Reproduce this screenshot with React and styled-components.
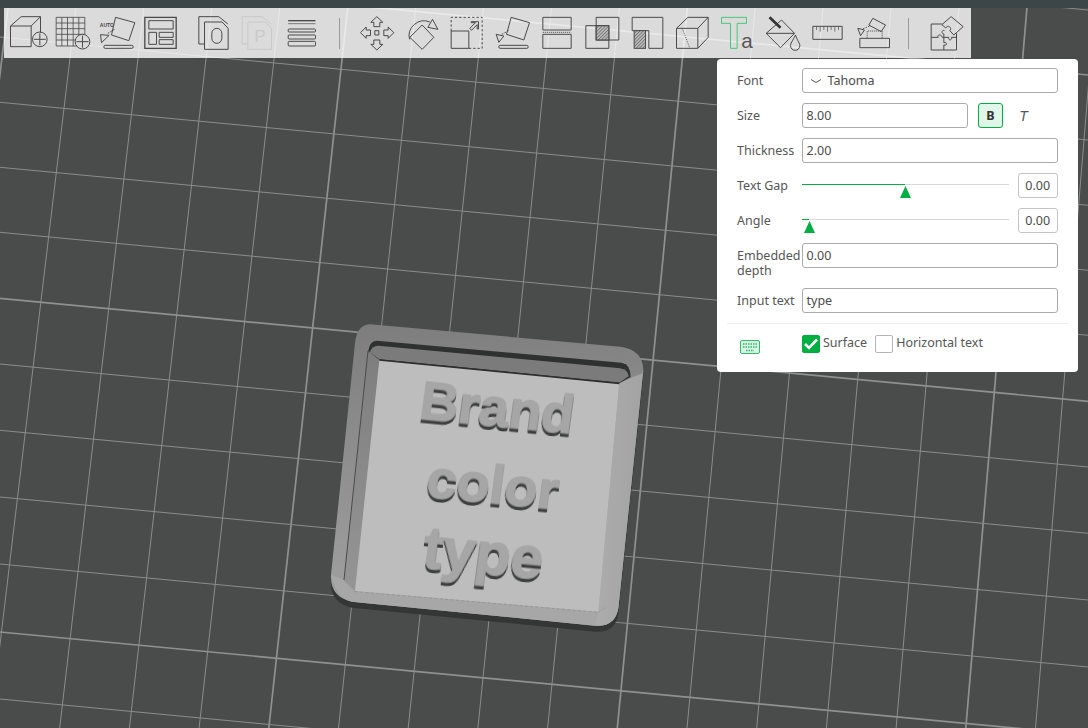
import React from "react";
import styled, { createGlobalStyle } from "styled-components";

const Global = createGlobalStyle`
  html, body { margin: 0; padding: 0; background: #4a4c4c; }
  body { width: 1088px; height: 728px; overflow: hidden; font-family: "Noto Sans", "Liberation Sans", sans-serif; }
  * { box-sizing: border-box; }
`;

const Stage = styled.div`
  position: relative;
  width: 1088px;
  height: 728px;
  overflow: hidden;
  background: #4a4c4c;
`;
const Scene = styled.svg`
  position: absolute;
  inset: 0;
  display: block;
`;
const TopStrip = styled.div`
  position: relative;
  height: 8px;
  background: #3c4648;
`;
const Toolbar = styled.div`
  position: relative;
  display: flex;
  align-items: center;
  width: 967px;
  height: 50px;
  margin-left: 4px;
  padding-left: 1.5px;
  background: rgba(255, 255, 255, 0.8);
`;
const Tool = styled.svg`
  display: block;
  flex: none;
  width: 45px;
  height: 50px;
  fill: none;
  stroke: ${(p) => p.$tone || "#4a4a4a"};
  stroke-width: 3;
`;
const Spacer = styled.div`
  flex: none;
  width: 5px;
`;
const Divider = styled.div`
  flex: none;
  display: flex;
  justify-content: center;
  width: ${(p) => p.$w}px;
  &::before {
    content: "";
    width: 1.5px;
    height: 31px;
    background: #9b9b9b;
  }
`;

const Panel = styled.div`
  position: absolute;
  left: 717px;
  top: 59px;
  width: 361px;
  height: 313px;
  padding: 9px 20px 0;
  background: #fff;
  border-radius: 4px;
  color: #565656;
  font-size: 12.5px;
`;
const Row = styled.div`
  display: flex;
  align-items: center;
  width: 320.5px;
  height: 25px;
  margin-bottom: ${(p) => p.$after || 10}px;
`;
const Label = styled.div`
  flex: none;
  width: 65px;
  line-height: 15px;
  white-space: ${(p) => (p.$wrap ? "normal" : "nowrap")};
  transform: translateY(${(p) => (p.$wrap ? "7px" : "0")});
`;
const Field = styled.div`
  display: flex;
  align-items: center;
  flex: ${(p) => (p.$w ? "none" : "1")};
  width: ${(p) => (p.$w ? `${p.$w}px` : "auto")};
  height: 25px;
  padding: 0 3.5px;
  border: 1px solid #ababab;
  border-radius: 3px;
  color: #4c4c4c;
  white-space: nowrap;
`;
const Chevron = styled.svg`
  display: block;
  width: 10px;
  height: 4px;
  margin: 0 7px 0 4px;
  fill: none;
  stroke: #555;
  stroke-width: 1;
`;
const BoldButton = styled.div`
  display: flex;
  align-items: center;
  justify-content: center;
  flex: none;
  width: 25px;
  height: 25px;
  margin-left: 10px;
  border: 1px solid #00ae42;
  border-radius: 3px;
  background: #e0f6e8;
  color: #333;
  font-weight: 700;
`;
const ItalicButton = styled.div`
  flex: none;
  width: 25px;
  margin-left: 8px;
  text-align: center;
  font-style: italic;
  font-family: "Liberation Sans", sans-serif;
  color: #555;
  font-size: 14px;
`;
const Slider = styled.div`
  position: relative;
  flex: none;
  width: 207px;
  height: 25px;
  margin-right: 9px;
`;
const Track = styled.div`
  position: absolute;
  left: 0;
  right: 0;
  top: 10.5px;
  height: 1.5px;
  background: #d8d8d8;
`;
const TrackFill = styled.div`
  position: absolute;
  left: 0;
  top: 10.5px;
  height: 1.5px;
  background: #00ae42;
`;
const Thumb = styled.svg`
  position: absolute;
  top: 13px;
  width: 11px;
  height: 12px;
  fill: #00ae42;
`;
const Spin = styled.div`
  display: flex;
  align-items: center;
  justify-content: center;
  flex: none;
  width: 39.5px;
  height: 25px;
  border: 1px solid #c4c4c4;
  border-radius: 3px;
  color: #4c4c4c;
`;
const Rule = styled.div`
  height: 1px;
  margin: 0 -10px;
  background: #eeeeee;
`;
const Footer = styled.div`
  display: flex;
  align-items: center;
  width: 321px;
  height: 18px;
  margin-top: 11px;
  line-height: 15px;
`;
const KeyboardIcon = styled.svg`
  display: block;
  flex: none;
  width: 20px;
  height: 14px;
  margin: 5px 42px 0 3px;
  fill: #d9f5e4;
  stroke: #2fbb68;
  stroke-width: 1;
`;
const Check = styled.div`
  display: flex;
  align-items: center;
  justify-content: center;
  flex: none;
  width: 18px;
  height: 18px;
  margin-right: 3px;
  border-radius: 2px;
  border: 1px solid ${(p) => (p.$on ? "#00ae42" : "#b4b4b4")};
  background: ${(p) => (p.$on ? "#00ae42" : "#fff")};
`;
const CheckText = styled.span`
  margin-right: ${(p) => p.$gap || 0}px;
  transform: translateY(-2px);
  white-space: nowrap;
`;

const vLines = Array.from({ length: 17 }, (_, k) => {
  const i = k - 1;
  const top = 70 + 68.05 * i;
  const bot = -10 + 69.7 * i;
  const slope = (bot - top) / 670;
  return { i, x1: top - 58 * slope, x2: bot, thick: (i + 1) % 5 === 0 };
});
const hStarts = [-93, -28, 37, 102.3, 167.3, 232.3, 298.3, 364, 430.3, 497, 564, 632, 699];
const hLines = hStarts.map((y, j) => ({ y, thick: j % 5 === 1 }));

function Grid() {
  return (
    <g>
      {vLines.map((l) => (
        <line key={l.i} x1={l.x1} y1={0} x2={l.x2} y2={728} stroke={l.thick ? "#8f9191" : "#8b8d8d"} strokeWidth={l.thick ? 1.7 : 1} />
      ))}
      {hLines.map((l) => (
        <line key={l.y} x1={0} y1={l.y} x2={1088} y2={l.y + 103} stroke={l.thick ? "#8f9191" : "#8b8d8d"} strokeWidth={l.thick ? 1.7 : 1} />
      ))}
    </g>
  );
}

const OUTER = "M150 28 L900 95 Q968 103 970 165 L895 880 Q885 937 825 932 L95 860 Q30 845 33 780 L105 85 Q110 30 150 28Z";

const ModelWord = styled.text`
  font-family: "Liberation Sans", sans-serif;
  font-weight: 700;
  fill: #a6a6a6;
  stroke: #a6a6a6;
  stroke-width: 1.2;
  filter: drop-shadow(0 1px 0 #8c8c8c) drop-shadow(0 3px 0 #3c3d3d);
`;

function Model() {
  return (
    <g>
      <g transform="translate(320 315) scale(.33333)">
        <defs>
          <linearGradient id="rimBase" x1="0.3" y1="0" x2="0.4" y2="1">
            <stop offset="0" stopColor="#7e7e7e" />
            <stop offset="0.3" stopColor="#8a8a8a" />
            <stop offset="1" stopColor="#a4a4a4" />
          </linearGradient>
          <linearGradient id="rimRight" x1="0" y1="0" x2="1" y2="0">
            <stop offset="0" stopColor="#acacac" />
            <stop offset="1" stopColor="#a3a3a3" />
          </linearGradient>
          <linearGradient id="wallLeft" x1="0" y1="0" x2="0" y2="1">
            <stop offset="0" stopColor="#7e7e7e" />
            <stop offset="1" stopColor="#959595" />
          </linearGradient>
        </defs>
        <path d={OUTER} transform="translate(0 18)" fill="#343636" />
        <path d={OUTER} fill="url(#rimBase)" />
        <path d="M105 828 L835 890 L825 932 L95 860 Q50 850 33 780 L72 795 Z" fill="#a7a7a7" />
        <path d="M898 205 L930 190 L968 175 Q968 170 970 165 L895 880 Q885 937 825 932 L835 890 Z" fill="url(#rimRight)" />
        <path d="M170 77 L905 143 Q932 148 932 186 L898 205 L178 135 L144 112 Q148 78 170 77Z" fill="#2f3030" />
        <path d="M175 92 L900 160 Q925 165 926 184 L898 203 L178 133 L150 112 Q155 92 175 92Z" fill="#7b7b7b" />
        <path d="M146 108 L178 135 L105 828 L72 795 Z" fill="url(#wallLeft)" />
        <path d="M144 108 L72 795" stroke="#4a4a4a" strokeWidth="3" fill="none" />
        <path d="M178 135 L898 205 L835 890 L105 828 Z" fill="#bdbdbd" />
        <path d="M178 135 L898 205" stroke="#2c2d2d" strokeWidth="5" fill="none" />
        <path d="M105 830 L835 892" stroke="#8c8c8c" strokeWidth="2" strokeDasharray="8 8" fill="none" />
        <path d="M72 798 L105 830 M835 892 L860 875" stroke="#8c8c8c" strokeWidth="2" strokeDasharray="5 5" fill="none" />
      </g>
      <ModelWord transform="translate(418 418) rotate(5.6) skewX(-2)" fontSize="53.5">Brand</ModelWord>
      <ModelWord transform="translate(425 496) rotate(5.6) skewX(-2)" fontSize="54">color</ModelWord>
      <ModelWord transform="translate(421 567) rotate(5.6) skewX(-2)" fontSize="58.5">type</ModelWord>
    </g>
  );
}

const Icon = ({ c, o = 0, tone, children }) => (
  <Tool viewBox={`${(c - 22.5 - o) * 3} 24 135 150`} $tone={tone}>
    {children}
  </Tool>
);

const Hatch = ({ id }) => (
  <defs>
    <pattern id={id} width="7" height="7" patternUnits="userSpaceOnUse" patternTransform="rotate(-45)">
      <rect width="7" height="7" fill="#b9b9b9" stroke="none" />
      <line x1="0" y1="0" x2="7" y2="0" stroke="#4a4a4a" strokeWidth="3" />
    </pattern>
  </defs>
);

const SmallText = styled.text`
  font-family: "Liberation Sans", sans-serif;
  font-size: ${(p) => p.$size}px;
  font-weight: ${(p) => p.$weight || 400};
  fill: ${(p) => p.$fill};
  stroke: none;
`;

export default function App() {
  return (
    <Stage>
      <Global />
      <Scene width="1088" height="728" viewBox="0 0 1088 728">
        <Grid />
        <Model />
      </Scene>
      <TopStrip />
      <Toolbar>
        <Icon c={28}>
          <path d="M30 78H92V140H30Z M30 78L62 50H120L92 78 M120 50V98" />
          <circle cx="118" cy="118" r="22" />
          <path d="M118 100V136 M100 118H136" />
        </Icon>
        <Icon c={73}>
          <path d="M167 52H253V138H167Z M184 52V138 M201 52V138 M218 52V138 M235 52V138 M167 69H253 M167 86H253 M167 103H253 M167 120H253" strokeWidth="2.5" />
          <circle cx="246" cy="125" r="22" fill="#dbdbdb" />
          <path d="M246 107V143 M228 125H264" />
        </Icon>
        <Icon c={118}>
          <SmallText x="298" y="81" $size="15" $weight="700" $fill="#444">AUTO</SmallText>
          <path d="M345 52L403 68L385 122L333 105Z" />
          <path d="M303 128L326 106L300 104Z" />
          <path d="M322 100L342 88" strokeDasharray="5 4" />
          <rect x="310" y="136" width="88" height="9" rx="4" />
        </Icon>
        <Icon c={163}>
          <path d="M433 52H527V145H433Z" strokeWidth="4" />
          <path d="M445 62H518V87H445Z M445 97H468V133H445Z M476 97H518V112H476Z M476 119H518V133H476Z" />
        </Icon>
        <Spacer />
        <Icon c={213}>
          <path d="M612 132H595V50H655L682 72" />
          <path d="M612 66H665L683 85V148H612Z" />
          <rect x="634" y="85" width="30" height="45" rx="15" />
        </Icon>
        <Icon c={258} tone="#c9c9c9">
          <path d="M742 132H725V50H785L812 72" />
          <path d="M742 66H795L813 85V148H742Z" />
          <SmallText x="762" y="126" $size="50" $fill="#c9c9c9">P</SmallText>
        </Icon>
        <Icon c={303}>
          <path d="M863 62H945" strokeWidth="4" />
          <path d="M863 71H945" strokeWidth="2" />
          <rect x="863" y="87" width="82" height="9" rx="3" />
          <rect x="863" y="105" width="82" height="12" rx="3" />
          <rect x="863" y="124" width="82" height="14" rx="3" />
        </Icon>
        <Divider $w={28} />
        <Icon c={376} o={340}>
          <path d="M103 92H115V105H103Z" />
          <path d="M109 50L127 67H118V80H100V67H91Z" />
          <path d="M109 150L127 133H118V120H100V133H91Z" />
          <path d="M60 98L77 81V90H90V107H77V115Z" />
          <path d="M160 98L143 81V90H130V107H143V115Z" />
        </Icon>
        <Icon c={421} o={340}>
          <path d="M207 118A45 45 0 0 1 268 66" />
          <path d="M292 88L276 58L262 82Z" />
          <path d="M245 75L280 112L245 148L208 112Z" />
        </Icon>
        <Icon c={466} o={340}>
          <path d="M332 93H385V145H332Z" />
          <path d="M332 93V52H425V145H385" strokeDasharray="7 6" />
          <path d="M388 85L405 68H392V65H414V87H410V74L393 91Z" />
        </Icon>
        <Icon c={511} o={340}>
          <path d="M512 52L567 68L550 120L498 103Z" />
          <path d="M467 103L490 108L475 127Z" />
          <path d="M484 103L504 92" strokeDasharray="5 4" />
          <rect x="475" y="136" width="88" height="9" rx="4" />
        </Icon>
        <Icon c={556} o={340}>
          <path d="M607 52H692V90H607Z M607 103H692V145H607Z" />
          <path d="M607 97H692" strokeDasharray="3 3" />
        </Icon>
        <Icon c={601} o={340}>
          <Hatch id="hatchA" />
          <path d="M736 77H805V145H736Z M767 52H835V120H767Z" />
          <rect x="767" y="77" width="38" height="43" fill="url(#hatchA)" strokeWidth="3.5" />
        </Icon>
        <Icon c={646} o={340}>
          <Hatch id="hatchB" />
          <path d="M875 52H967V145H925V92H875Z" />
          <rect x="881" y="92" width="34" height="53" fill="url(#hatchB)" />
        </Icon>
        <Icon c={691} o={670}>
          <path d="M18 85L52 52H113V112L82 145H18Z M18 85H82V145 M82 85L113 52" />
          <path d="M35 85L45 110L58 145" strokeDasharray="3 4" />
        </Icon>
        <Icon c={736} o={670} tone="#45c978">
          <path d="M153 52H228V70H200V145H180V70H153Z" />
          <SmallText x="212" y="145" $size="62" $fill="#555">a</SmallText>
        </Icon>
        <Icon c={781} o={670}>
          <path d="M287 100L333 60L372 100L330 143Z M287 100H372" />
          <path d="M297 52L330 83" strokeWidth="8" stroke="#333" />
          <path d="M375 105C365 125 360 130 360 137A14 14 0 0 0 388 137C388 130 382 125 375 105Z" />
        </Icon>
        <Icon c={826} o={670}>
          <path d="M427 79H515V118H427Z" />
          <path d="M438 79V90 M449 79V95 M460 79V90 M471 79V95 M482 79V90 M493 79V95 M504 79V90" strokeWidth="2" />
        </Icon>
        <Icon c={871} o={670}>
          <path d="M568 115H657V143H568Z" />
          <path d="M590 115V93H635V115" strokeDasharray="3 3" />
          <path d="M607 55L645 75L632 95L595 75Z" />
          <path d="M562 85L582 90L570 107Z" />
          <path d="M578 86L598 78" strokeDasharray="4 4" />
        </Icon>
        <Divider $w={30} />
        <Icon c={946} o={670}>
          <path d="M815 72H782V150H858V100" />
          <path d="M782 112H803C798 105 812 100 815 112H820V102C810 100 815 88 822 92 M820 112V128C830 125 832 138 820 135V150" />
          <path d="M820 112H835C832 122 846 122 843 112H858" />
          <path d="M842 50L878 80L850 105L838 92C846 84 832 72 826 84L814 74Z" />
        </Icon>
      </Toolbar>
      <Panel>
        <Row>
          <Label>Font</Label>
          <Field>
            <Chevron viewBox="0 0 10 4"><path d="M0 .5L5 3.5L10 .5" /></Chevron>
            Tahoma
          </Field>
        </Row>
        <Row>
          <Label>Size</Label>
          <Field $w={166}>8.00</Field>
          <BoldButton>B</BoldButton>
          <ItalicButton>T</ItalicButton>
        </Row>
        <Row>
          <Label>Thickness</Label>
          <Field>2.00</Field>
        </Row>
        <Row>
          <Label>Text Gap</Label>
          <Slider>
            <Track />
            <TrackFill style={{ width: 103 }} />
            <Thumb viewBox="0 0 11 12" style={{ left: 98 }}><path d="M5.5 0L11 12H0Z" /></Thumb>
          </Slider>
          <Spin>0.00</Spin>
        </Row>
        <Row>
          <Label>Angle</Label>
          <Slider>
            <Track />
            <TrackFill style={{ width: 7 }} />
            <Thumb viewBox="0 0 11 12" style={{ left: 2 }}><path d="M5.5 0L11 12H0Z" /></Thumb>
          </Slider>
          <Spin>0.00</Spin>
        </Row>
        <Row $after={20}>
          <Label $wrap>Embedded depth</Label>
          <Field>0.00</Field>
        </Row>
        <Row>
          <Label>Input text</Label>
          <Field>type</Field>
        </Row>
        <Rule />
        <Footer>
          <KeyboardIcon viewBox="0 0 20 14">
            <rect x=".5" y=".5" width="19" height="13" rx="1.5" />
            <path d="M3 4H17 M3 7H17 M6 10.5H14" strokeDasharray="1.5 1" strokeWidth="1.4" />
          </KeyboardIcon>
          <Check $on>
            <svg width="14" height="12" viewBox="0 0 14 12" fill="none" stroke="#fff" strokeWidth="2.6">
              <path d="M1 6L5 10L13 1.5" />
            </svg>
          </Check>
          <CheckText $gap={8}>Surface</CheckText>
          <Check />
          <CheckText>Horizontal text</CheckText>
        </Footer>
      </Panel>
    </Stage>
  );
}
